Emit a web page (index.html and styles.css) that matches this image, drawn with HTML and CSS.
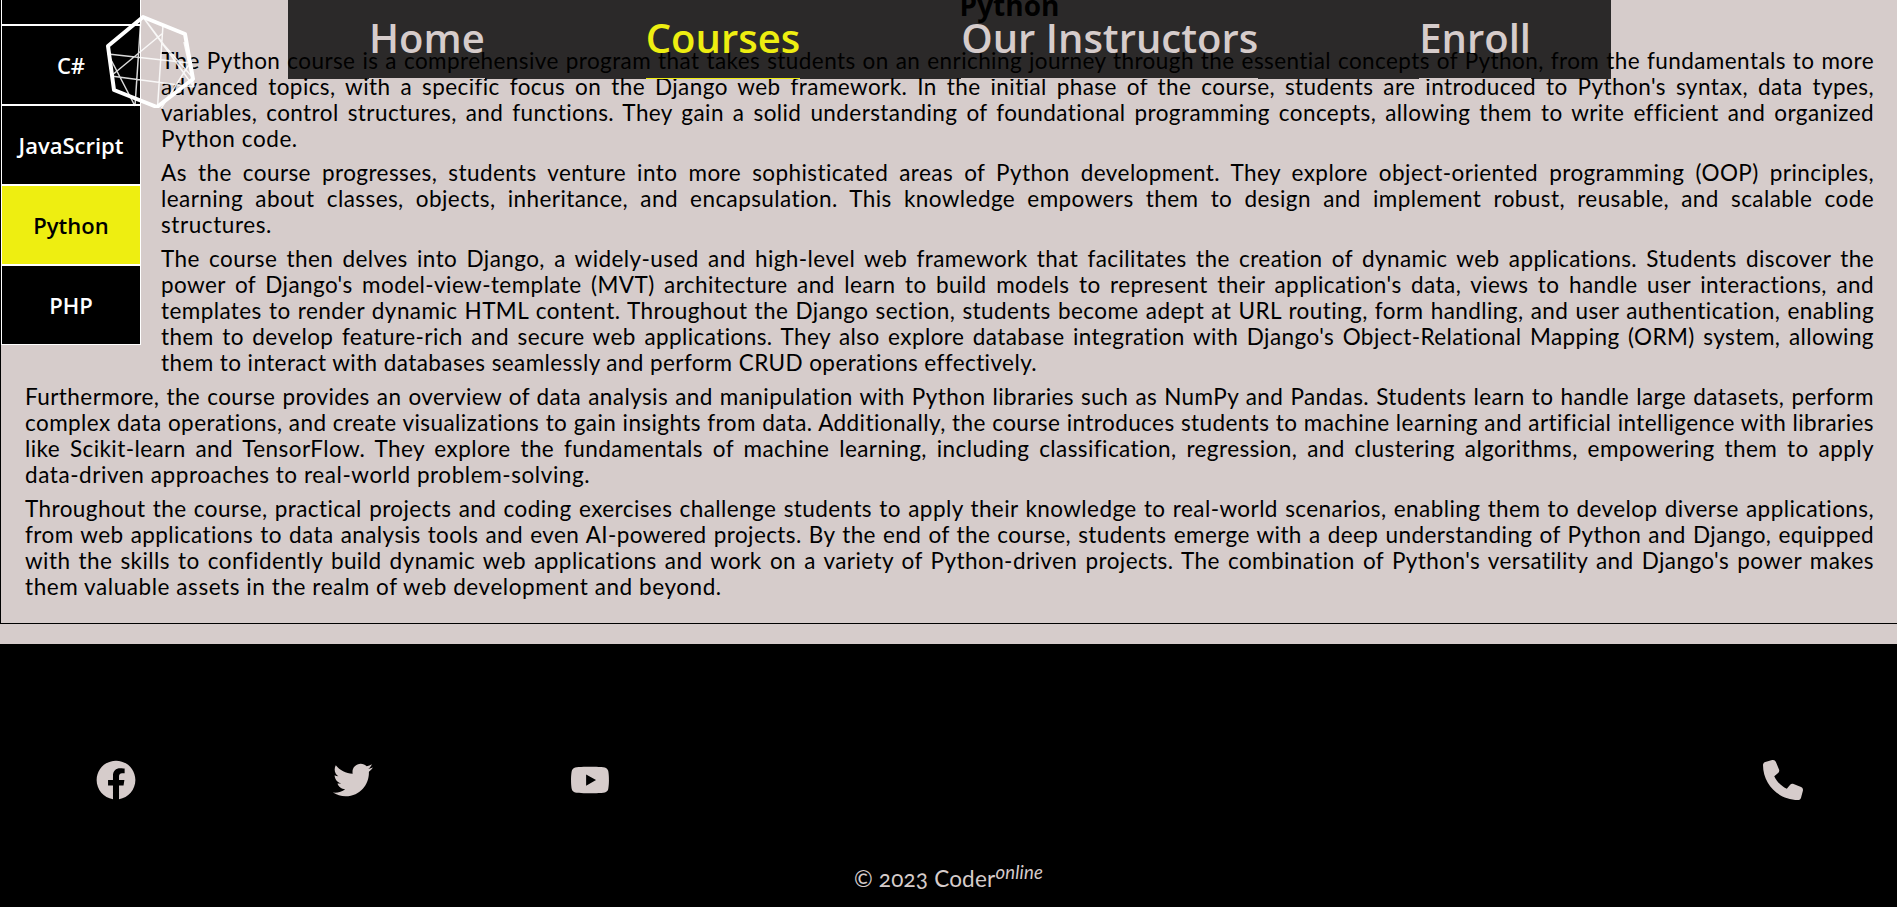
FILE: index.html
```html
<!DOCTYPE html>
<html lang="en">
<head>
<meta charset="utf-8">
<title>Coder online</title>
<link rel="stylesheet" href="styles.css">
</head>
<body>
<svg class="logo" viewBox="0 0 96 100" fill="none" stroke="#fff">
<path stroke-width="1.5" opacity=".85" d="M43 17 64 45 94 79M41 17 35 106M63 25 57 115M8 54 90 63M11 76 94 87M63 33 11 76M8 54 35 106M84 42 94 87M90 63 57 115M43 17 94 87" transform="translate(0 -8)"/>
<path stroke-width="4" stroke-linejoin="round" d="M43 9 85 26 93 71 57 99 14 82 8 38Z"/>
</svg>
<nav class="nav">
<a class="nav-link">Home</a>
<a class="nav-link active">Courses</a>
<a class="nav-link">Our Instructors</a>
<a class="nav-link">Enroll</a>
</nav>
<main class="course">
<aside class="tabs">
<div class="tab"></div>
<div class="tab">C#</div>
<div class="tab">JavaScript</div>
<div class="tab selected">Python</div>
<div class="tab">PHP</div>
</aside>
<h2 class="title">Python</h2>
<p><span>The Python course is a comprehensive program that takes students on an enriching journey through the essential concepts of Python, from the fundamentals to more</span>
<span>advanced topics, with a specific focus on the Django web framework. In the initial phase of the course, students are introduced to Python's syntax, data types,</span>
<span>variables, control structures, and functions. They gain a solid understanding of foundational programming concepts, allowing them to write efficient and organized</span>
<span class="end">Python code.</span></p>
<p><span>As the course progresses, students venture into more sophisticated areas of Python development. They explore object-oriented programming (OOP) principles,</span>
<span>learning about classes, objects, inheritance, and encapsulation. This knowledge empowers them to design and implement robust, reusable, and scalable code</span>
<span class="end">structures.</span></p>
<p><span>The course then delves into Django, a widely-used and high-level web framework that facilitates the creation of dynamic web applications. Students discover the</span>
<span>power of Django's model-view-template (MVT) architecture and learn to build models to represent their application's data, views to handle user interactions, and</span>
<span>templates to render dynamic HTML content. Throughout the Django section, students become adept at URL routing, form handling, and user authentication, enabling</span>
<span>them to develop feature-rich and secure web applications. They also explore database integration with Django's Object-Relational Mapping (ORM) system, allowing</span>
<span class="end tight">them to interact with databases seamlessly and perform CRUD operations effectively.</span></p>
<p class="wide"><span>Furthermore, the course provides an overview of data analysis and manipulation with Python libraries such as NumPy and Pandas. Students learn to handle large datasets, perform</span>
<span>complex data operations, and create visualizations to gain insights from data. Additionally, the course introduces students to machine learning and artificial intelligence with libraries</span>
<span>like Scikit-learn and TensorFlow. They explore the fundamentals of machine learning, including classification, regression, and clustering algorithms, empowering them to apply</span>
<span class="end">data-driven approaches to real-world problem-solving.</span></p>
<p><span>Throughout the course, practical projects and coding exercises challenge students to apply their knowledge to real-world scenarios, enabling them to develop diverse applications,</span>
<span>from web applications to data analysis tools and even AI-powered projects. By the end of the course, students emerge with a deep understanding of Python and Django, equipped</span>
<span>with the skills to confidently build dynamic web applications and work on a variety of Python-driven projects. The combination of Python's versatility and Django's power makes</span>
<span class="end">them valuable assets in the realm of web development and beyond.</span></p>
</main>
<footer class="footer">
<div class="icons">
<svg viewBox="0 0 512 512"><path d="M504 256C504 119 393 8 256 8S8 119 8 256c0 123.78 90.69 226.38 209.25 245V327.69h-63V256h63v-54.64c0-62.15 37-96.48 93.67-96.48 27.14 0 55.52 4.84 55.52 4.84v61h-31.28c-30.8 0-40.41 19.12-40.41 38.73V256h68.78l-11 71.69h-57.78V501C413.31 482.38 504 379.78 504 256z"/></svg>
<svg viewBox="0 0 512 512"><path d="M459.37 151.716c.325 4.548.325 9.097.325 13.645 0 138.72-105.583 298.558-298.558 298.558-59.452 0-114.68-17.219-161.137-47.106 8.447.974 16.568 1.299 25.34 1.299 49.055 0 94.213-16.568 130.274-44.832-46.132-.975-84.792-31.188-98.112-72.772 6.498.974 12.995 1.624 19.818 1.624 9.421 0 18.843-1.3 27.614-3.573-48.081-9.747-84.143-51.98-84.143-102.985v-1.299c13.969 7.797 30.214 12.67 47.431 13.319-28.264-18.843-46.781-51.005-46.781-87.391 0-19.492 5.197-37.36 14.294-52.954 51.655 63.675 129.3 105.258 216.365 109.807-1.624-7.797-2.599-15.918-2.599-24.04 0-57.828 46.782-104.934 104.934-104.934 30.213 0 57.502 12.67 76.67 33.137 23.715-4.548 46.456-13.32 66.599-25.34-7.798 24.366-24.366 44.833-46.132 57.827 21.117-2.273 41.584-8.122 60.426-16.243-14.292 20.791-32.161 39.308-52.628 54.253z"/></svg>
<svg viewBox="0 0 576 512"><path d="M549.655 124.083c-6.281-23.65-24.787-42.276-48.284-48.597C458.781 64 288 64 288 64S117.22 64 74.629 75.486c-23.497 6.322-42.003 24.947-48.284 48.597-11.412 42.867-11.412 132.305-11.412 132.305s0 89.438 11.412 132.305c6.281 23.65 24.787 41.5 48.284 47.821C117.22 448 288 448 288 448s170.78 0 213.371-11.486c23.497-6.321 42.003-24.171 48.284-47.821 11.412-42.867 11.412-132.305 11.412-132.305s0-89.438-11.412-132.305zm-317.51 213.508V175.185l142.739 81.205-142.739 81.201z"/></svg>
<svg class="phone" viewBox="0 0 512 512"><path d="M164.9 24.6c-7.7-18.6-28-28.5-47.4-23.2l-88 24C12.1 30.2 0 46 0 64C0 311.4 200.6 512 448 512c18 0 33.8-12.1 38.6-29.5l24-88c5.3-19.4-4.6-39.7-23.2-47.4l-96-40c-16.3-6.8-35.2-2.1-46.3 11.6L304.7 368C234.3 334.7 177.3 277.7 144 207.3L193.3 167c13.7-11.2 18.4-30 11.6-46.3l-40-96z"/></svg>
</div>
<div class="copy">© 2023 Coder<sup>online</sup></div>
</footer>
</body>
</html>
```
FILE: styles.css
```css
* { box-sizing: border-box; }
html, body { height: 907px; overflow: hidden; }
body { margin: 0; background: #d6cccb; color: #000; font-family: Lato, sans-serif; font-size: 22.5px; line-height: 26px; }
.logo { position: absolute; z-index: 3; left: 100px; top: 8px; width: 96px; height: 100px; }
.nav { position: absolute; z-index: 2; left: 288px; top: 0; width: 1323px; height: 79px; display: flex; justify-content: space-between; padding: 0 80px 0 81px; background: rgba(0,0,0,.8); }
.nav-link { height: 79px; border-bottom: 1px solid #d6cccb; color: #d6cccb; font: 600 40px/76px "Open Sans", sans-serif; }
.nav-link.active { color: #eeee11; border-color: #eeee11; }
.course { height: 624px; border: solid #000; border-width: 0 0 1px 1px; padding: 0 23px 0 24px; }
.tabs { float: left; width: 140px; margin: -55px 20px 20px -24px; }
.tab { height: 80px; border: 1px solid #fff; background: #000; color: #fff; text-align: center; font: 600 22px/78px "Open Sans", sans-serif; }
.tab.selected { background: #eeee11; color: #000; }
.title { margin: 0; padding: 0 16px 25px 0; height: 48px; text-align: center; font: 700 28px/10px "Open Sans", sans-serif; }
.course p { margin: 0 0 8px; letter-spacing: .42px; }
.course p span { display: block; height: 26px; white-space: nowrap; text-align: justify; text-align-last: justify; }
.course p .end { text-align-last: left; letter-spacing: .57px; }
.course p .tight { letter-spacing: .41px; }
.wide { clear: left; }
.footer { margin-top: 20px; height: 263px; background: #000; color: #d6cccb; }
.icons { display: flex; gap: 197px; padding: 116px 94px 0 96px; }
.icons svg { width: 40px; height: 40px; fill: #d6cccb; }
.icons .phone { margin-left: auto; }
.copy { margin-top: 66px; text-align: center; letter-spacing: .2px; font-variant-numeric: oldstyle-nums; }
sup { font-size: 18.5px; font-style: italic; line-height: 0; }
```
